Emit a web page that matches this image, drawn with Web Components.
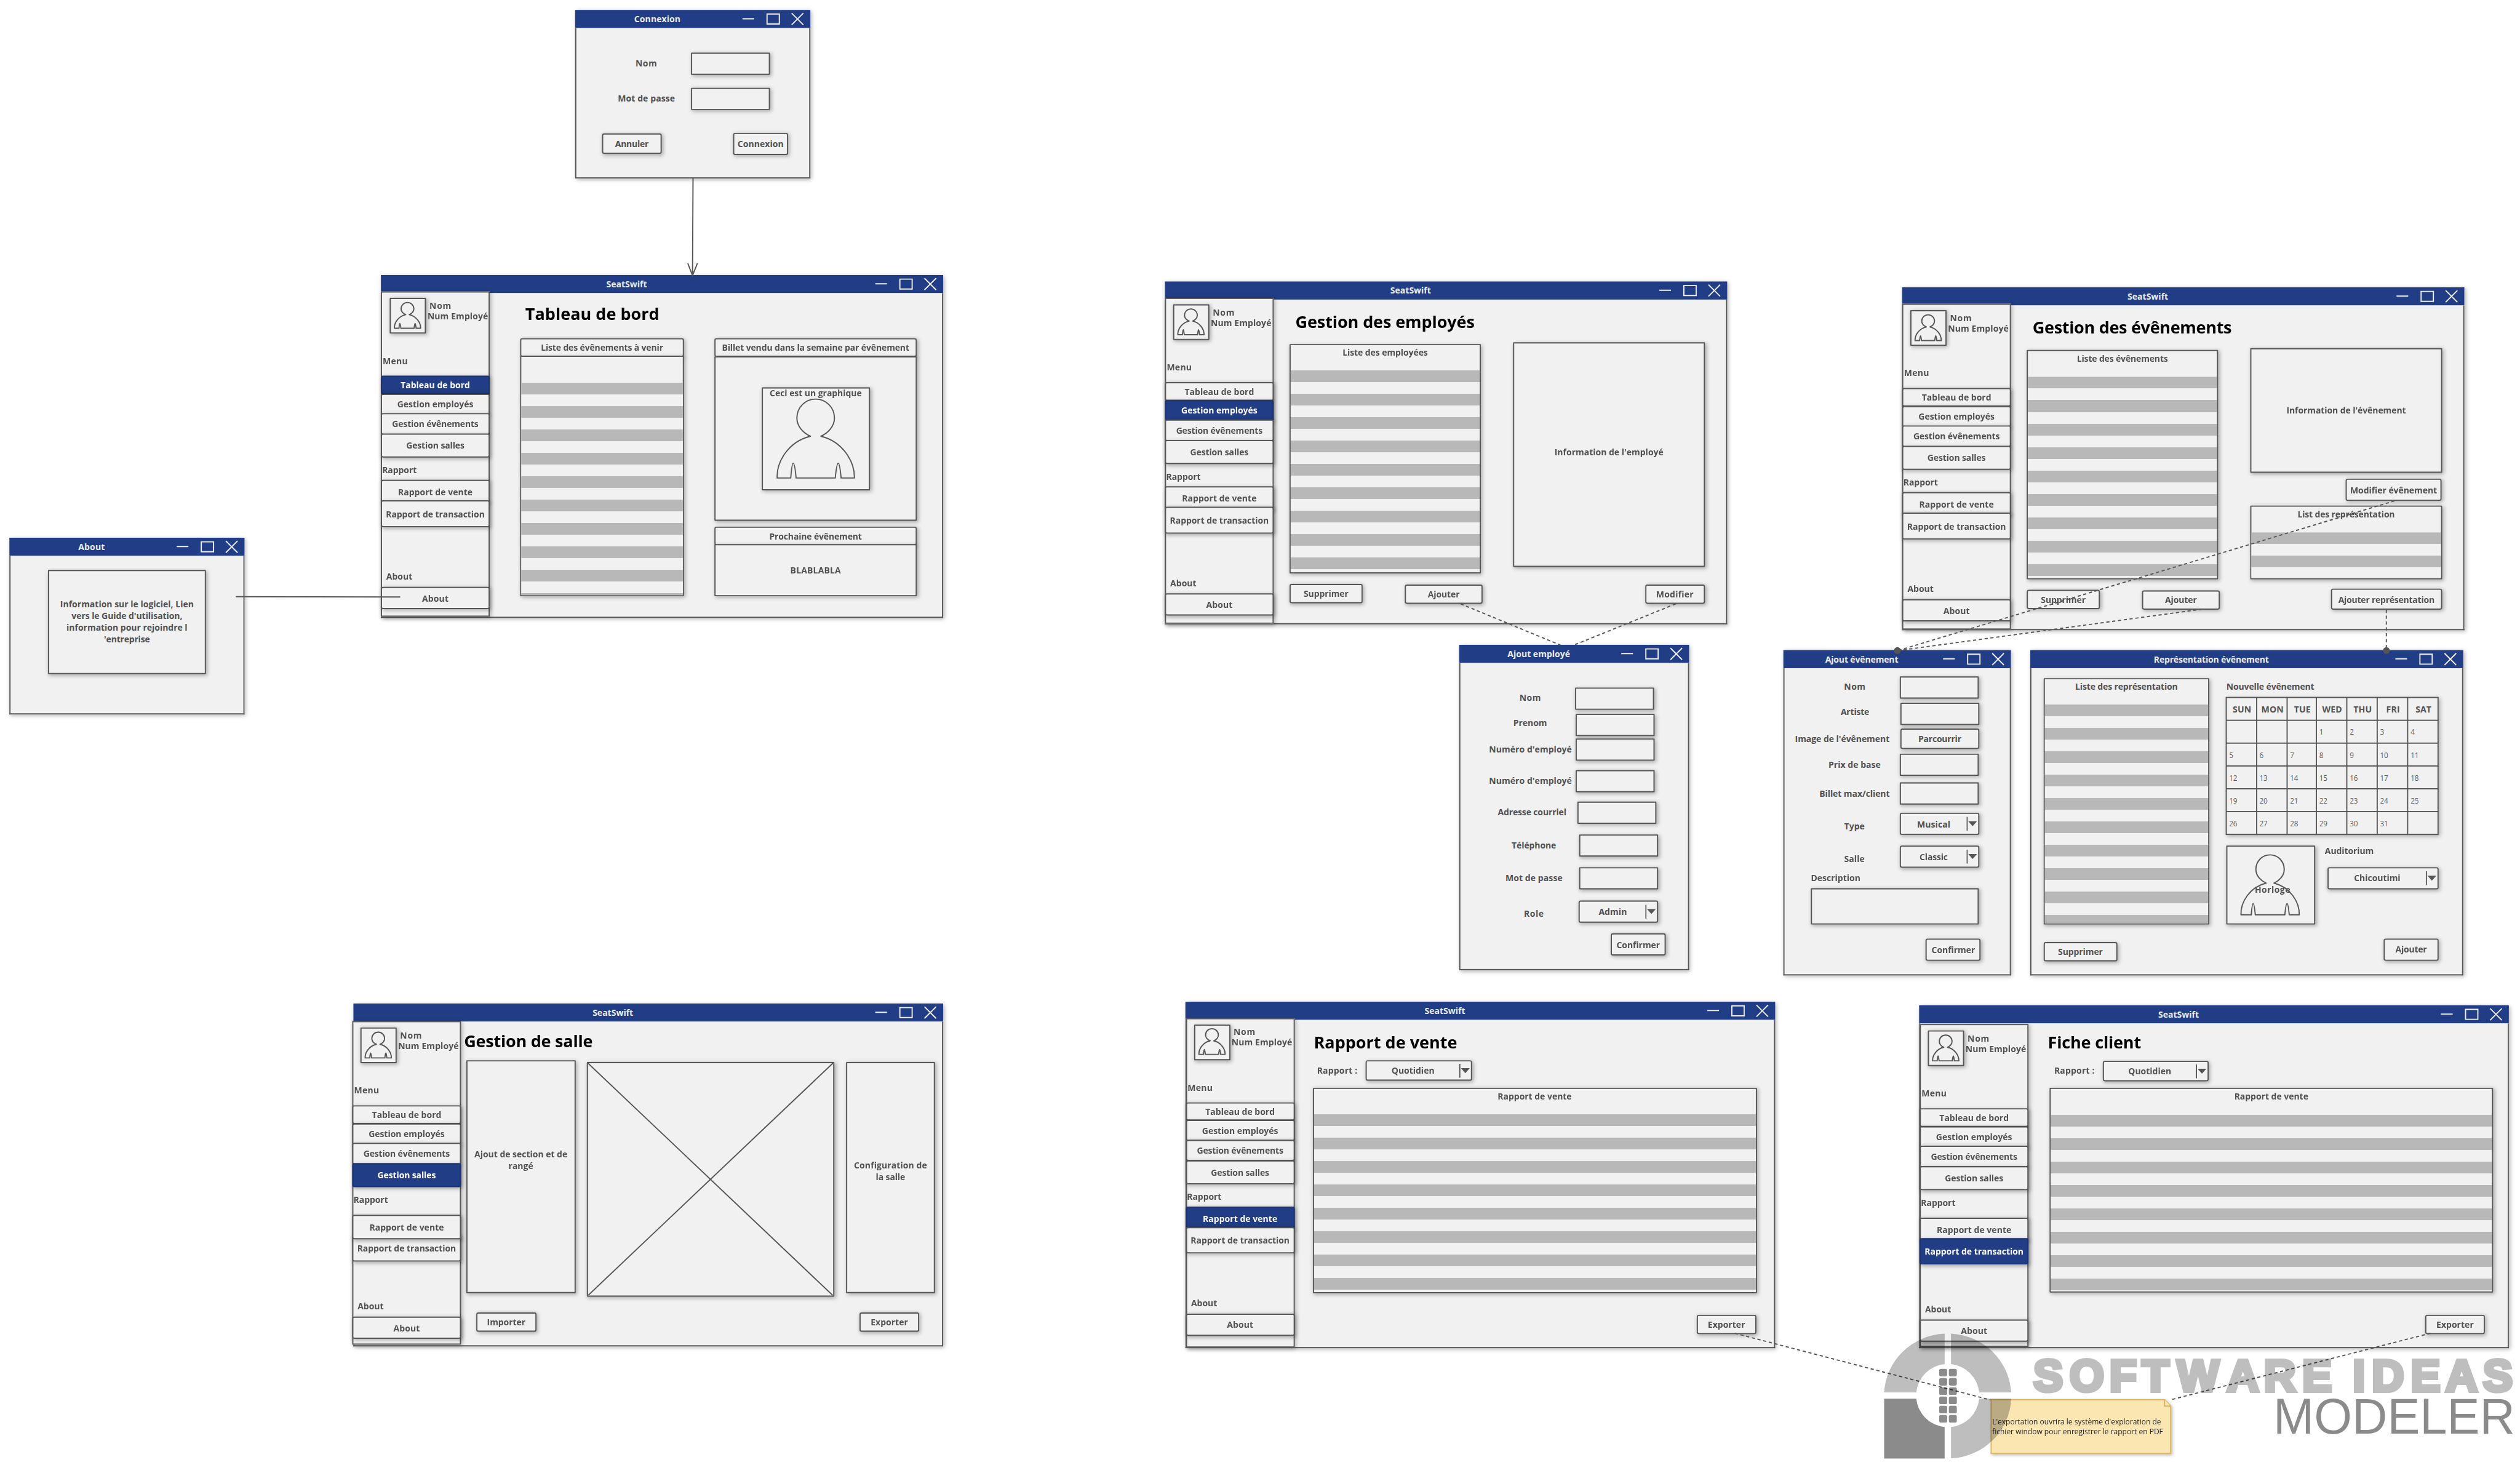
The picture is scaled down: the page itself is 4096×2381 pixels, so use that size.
<!DOCTYPE html>
<html lang="fr">
<head>
<meta charset="utf-8">
<title>SeatSwift – maquettes</title>
<style>
html,body{margin:0;padding:0;background:#fff;overflow:hidden;width:4096px;height:2381px}
</style>
</head>
<body>
<wf-board></wf-board>
<script>
const INK='#505050', LINE='#555555', FILL='#f1f1f1', BLUE='#213d85';
const SHADOW='2px 2px 7px rgba(0,0,0,.3)';
const FONT='"Open Sans","Noto Sans",sans-serif';

/* ---------- flow helpers: nested flex rows and columns with margins ---------- */
const node=(tag,attrs,x,y,w,h,body='')=>({x,y,w,h,html:m=>`<${tag} ${attrs} style="flex:none;margin:${m};width:${w}px;height:${h}px">${body}</${tag}>`});
const f=n=>+n.toFixed(2);
function pack(kind,kids){
  const x=kind==='row'?kids[0].x:Math.min(...kids.map(k=>k.x));
  const y=kind==='row'?Math.min(...kids.map(k=>k.y)):kids[0].y;
  const w=Math.max(...kids.map(k=>k.x+k.w))-x, h=Math.max(...kids.map(k=>k.y+k.h))-y;
  return {x,y,w,h,html:m=>{
    let cur=kind==='row'?x:y, out='';
    for(const k of kids){
      if(kind==='row'){out+=k.html(`${f(k.y-y)}px 0 0 ${f(k.x-cur)}px`);cur=k.x+k.w;}
      else{out+=k.html(`${f(k.y-cur)}px 0 0 ${f(k.x-x)}px`);cur=k.y+k.h;}
    }
    return `<div class="${kind}" style="margin:${m}">${out}</div>`;}};
}
const row=(...k)=>pack('row',k), col=(...k)=>pack('col',k);
const place=(n,ox,oy)=>n.html(`${f(n.y-oy)}px 0 0 ${f(n.x-ox)}px`);
const FLOW='.row,.col{display:flex;flex:none;align-items:flex-start}.col{flex-direction:column}';

/* text whose centre line is yc, starting at x */
const text=(t,x,yc,w,extra='')=>node('wf-label',`ink="${w}" ${extra}`,x,yc-10.5,w,20,t);
const textC=(t,cx,yc,w)=>text(t,cx-w/2,yc,w);
const title=(t,x,base,w)=>node('wf-label',`ink="${w}" kind="title"`,x,base-31,w,40,t);
const box=(kind,x,y,w,h,label='',tw='',lift=0)=>node('wf-box',`kind="${kind}" label="${label}" ink="${tw}" lift="${lift}"`,x,y,w,h);
const button=(...a)=>box('button',...a);
const panel=(...a)=>box('panel',...a);
const field=(x,y,w=135,h=38)=>box('field',x,y,w,h);
const select=(x,y,w,h,label,tw)=>node('wf-select',`label="${label}" ink="${tw}"`,x,y,w,h);
const list=(x,y,w,h,label,tw,start=45)=>node('wf-list',`label="${label}" ink="${tw}" start="${start}"`,x,y,w,h);
const side=(x,y,h,active,shift=0)=>node('wf-sidebar',`active="${active}" shift="${shift}"`,x,y,186,h);

class Base extends HTMLElement{
  constructor(){super();this.attachShadow({mode:'open'});}
  a(n,d=''){return this.getAttribute(n)??d;}
  connectedCallback(){this.shadowRoot.innerHTML=this.view();}
}
const ctx=document.createElement('canvas').getContext('2d');

customElements.define('wf-label',class extends Base{
  view(){
    const k=this.a('kind');
    const [size,weight,lh,color]=k==='title'?[28.4,700,40,'#000']:k==='note'?[12.6,400,17,'#262626']:[14.7,700,20,'inherit'];
    const t=this.textContent, w=+this.a('ink',0);
    let ls=0;
    if(w){ctx.font=`${weight} ${size*10}px ${FONT}`;const m=ctx.measureText(t);ls=(w-(m.actualBoundingBoxRight+m.actualBoundingBoxLeft)/10)/Math.max(1,t.length-1);}
    return `<style>:host{display:flex;justify-content:center;white-space:nowrap;color:${color};font:${weight} ${size}px/${lh}px ${FONT};letter-spacing:${ls.toFixed(3)}px}
    span{flex:none;margin-right:${(-ls).toFixed(3)}px}</style><span><slot></slot></span>`;
  }
});

const labels=(l,w)=>{const ws=w.split('|');return l?l.split('|').map((t,i)=>`<wf-label ink="${ws[i]}">${t}</wf-label>`).join(''):'';};

customElements.define('wf-box',class extends Base{
  view(){
    const k=this.a('kind'), lift=+this.a('lift',0), act=k==='active';
    return `<style>:host{display:flex;flex-direction:column;align-items:center;justify-content:center;box-sizing:border-box;
      background:${act?BLUE:FILL};border:2px solid ${act?'#1a3274':LINE};color:${act?'#fff':INK};
      border-radius:${k==='button'||act?3.5:1}px;box-shadow:${SHADOW};padding-bottom:${1+lift*2}px}
      ${k==='cross'?':host{padding:0}svg{width:100%;height:100%;display:block}':''}</style>
      ${k==='cross'?`<svg viewBox="0 0 100 100" preserveAspectRatio="none"><path d="M0 0L100 100M100 0L0 100" stroke="${LINE}" stroke-width="2" vector-effect="non-scaling-stroke" fill="none"/></svg>`:labels(this.a('label'),this.a('ink'))}`;
  }
});

customElements.define('wf-select',class extends Base{
  view(){return `<style>:host{display:flex;align-items:center;box-sizing:border-box;background:${FILL};border:2px solid ${LINE};border-radius:3.5px;box-shadow:${SHADOW};color:${INK}}
    .t{flex:1;display:flex;justify-content:center;padding-bottom:1px}svg{flex:none;display:block}</style>
    <div class="t">${labels(this.a('label'),this.a('ink'))}</div>
    <svg width="20" height="24" viewBox="0 0 20 24"><path d="M1 0V24" stroke="${LINE}" stroke-width="2"/><path d="M3 7.5H18L10.5 16Z" fill="${LINE}"/></svg>`;}
});

customElements.define('wf-list',class extends Base{
  view(){const s=+this.a('start',45)-2;return `<style>:host{display:flex;flex-direction:column;box-sizing:border-box;background:${FILL};border:2px solid ${LINE};border-radius:1px;box-shadow:${SHADOW};color:${INK}}
    header{flex:none;box-sizing:border-box;height:${s}px;padding-top:2px;display:flex;justify-content:center}
    main{flex:1;background:repeating-linear-gradient(#b8b8b8 0 20px,${FILL} 20px 40px)}</style>
    <header>${labels(this.a('label'),this.a('ink'))}</header><main></main>`;}
});

customElements.define('wf-person',class extends Base{
  view(){return `<style>:host{display:block}svg{display:block;width:100%;height:100%;overflow:visible}</style>
  <svg viewBox="26 19.5 132.6 135" preserveAspectRatio="none"><path d="M83.3 83C46 92 25 126 26.300 154.400H49.500C50.500 142 51.800 129 53.700 129C55.600 129 57.500 142 58.700 154.400H125.600C126.800 142 128.600 129 130.700 129C132.500 129 134.400 142 135.600 154.400H158.300C159 126 138 92 101 83C112 78 124.200 67 124.200 52C124.200 34 110 19.500 92 19.500C74 19.500 60 34 60 52C60 67 72 78 83.300 83Z" fill="none" stroke="${LINE}" stroke-width="2" stroke-linejoin="round" vector-effect="non-scaling-stroke"/></svg>`;}
});

/* framed picture placeholder with the person glyph and an optional caption over it */
customElements.define('wf-image',class extends Base{
  view(){const p=this.a('pad').split(' ').map(Number), cap=this.a('label');
    return `<style>:host{display:grid;box-sizing:border-box;background:${FILL};border:2px solid ${LINE};border-radius:1px;box-shadow:${SHADOW};color:${INK}}
    wf-person,.cap{grid-area:1/1}
    wf-person{width:${p[2]}px;height:${p[3]}px;margin:${p[1]-2}px 0 0 ${p[0]-2}px}
    .cap{display:flex;justify-content:center;margin:${+this.a('cy',0)-12.5}px ${-(+this.a('cx',0))}px 0 ${+this.a('cx',0)}px}</style>
    <wf-person></wf-person>${cap?`<div class="cap">${labels(cap,this.a('ink'))}</div>`:''}`;}
});
const image=(x,y,w,h,pad,label='',tw='',cy=0,cx=0)=>node('wf-image',`pad="${pad}" label="${label}" ink="${tw}" cy="${cy}" cx="${cx}"`,x,y,w,h);

customElements.define('wf-calendar',class extends Base{
  view(){
    const heads=['SUN','MON','TUE','WED','THU','FRI','SAT'];
    let c=heads.map(h=>`<b>${h}</b>`).join('');
    for(let i=0;i<35;i++){const d=i-2;c+=`<i>${d>0&&d<32?d:''}</i>`;}
    return `<style>:host{display:grid;box-sizing:border-box;padding:2px;gap:2px;background:${LINE};box-shadow:${SHADOW};
      grid-template-columns:49.8fr 50.2fr 47.8fr 50.2fr 49.7fr 50.3fr 49.7fr;grid-template-rows:repeat(6,1fr);color:${INK};font-family:${FONT}}
      b,i{background:${FILL};display:flex;align-items:center;font-style:normal;min-width:0;min-height:0}
      b{justify-content:center;font-size:14.800px;padding:2px 0 0 2px;letter-spacing:.15px}
      i{font-size:12.3px;padding:3px 0 0 4px;color:#5c5c5c;letter-spacing:-.2px}</style>${c}`;
  }
});

customElements.define('wf-sidebar',class extends Base{
  view(){
    const act=this.a('active'), s=+this.a('shift',0), dx=act==='Tableau de bord'?1.2:0;
    const item=(t,y,b,w)=>box(t===act?'active':'button',0,y,186,b-y,t,w);
    const vb=s===2?373:363+(s?9:0), vy=322.5+(s?8.7:0);
    const vente=item('Rapport de vente',vy,vb,125.6), trans=item('Rapport de transaction',357.5+(s?8.3:0),403+(s?8.3:0),166.7);
    if(s===2){const v=vente.html;vente.html=m=>v(m+';z-index:1');}
    const tree=col(
      row(image(14+dx/2,11,62,61,'8 7.5 45 44'),col(text('Nom',83+dx,24,34.7),text('Num Employé',79.4+dx,42.2,101.6))),
      text('Menu',4.3,118.7,40.4),
      item('Tableau de bord',144.2,176,117.4),
      item('Gestion employés',174.7,211,128.8),
      item('Gestion évênements',208.5,245,146.5),
      item('Gestion salles',243.5,284.2,98.5),
      text('Rapport',3,305.4,57.4),
      vente,trans,
      text('About',9.3,487.5,44.3),
      item('About',505.4,543.2,44.8));
    return `<style>:host{display:flex;align-items:flex-start;box-sizing:border-box;background:${FILL};border:2px solid ${LINE};box-shadow:${SHADOW};color:${INK}}${FLOW}</style>${place(tree,2,2)}`;
  }
});

customElements.define('wf-window',class extends Base{
  view(){return `<style>:host{display:flex;flex-direction:column;box-shadow:${SHADOW};color:${INK}}
    header{flex:none;height:31px;background:${BLUE};color:#ececec;display:flex;align-items:flex-start}
    .t{flex:1;display:flex;justify-content:center;padding-top:4.500px}svg{flex:none;display:block}
    main{flex:1;box-sizing:border-box;min-height:0;background:${FILL};border:2px solid ${LINE};border-top:0;display:flex;align-items:flex-start}</style>
    <header><div class="t">${labels(this.a('label'),this.a('ink'))}</div>
    <svg width="121" height="31" viewBox="0 0 121 31" fill="none" stroke="#f0f0f0" stroke-width="2"><path d="M5 15H25M47 7H68V24H47ZM89 5.500L109 25.500M109 5.500L89 25.500"/></svg></header>
    <main><slot></slot></main>`;}
});

/* connectors between windows */
customElements.define('wf-links',class extends Base{
  view(){return `<style>:host{display:block}svg{display:block}</style><svg width="4306" height="2503" fill="none" stroke="${LINE}" stroke-width="2">
    <path d="M1184.500 305L1183.600 470M1175.500 450L1183.600 471L1192 450"/>
    <path d="M403 1019.700L684 1020.200"/>
    <g stroke-dasharray="5.5 4.500"><path d="M2496.500 1032L2667 1102.500"/><path d="M2864 1032L2690 1102.500"/>
    <path d="M4092.400 856L3243 1112"/><path d="M3764 1041L3243 1112"/><path d="M4078.600 1042V1112"/>
    <path d="M2965 2278.500L3402 2392.500"/><path d="M4154 2278.500L3711 2392"/></g>
    <g fill="${LINE}" stroke="none"><circle cx="3243" cy="1111.800" r="5.800"/><circle cx="4078.700" cy="1111.800" r="5.800"/></g></svg>`;}
});

customElements.define('wf-note',class extends Base{
  view(){return `<style>:host{display:grid;filter:drop-shadow(2px 2px 3px rgba(0,0,0,.28))}
    svg,.t{grid-area:1/1}svg{display:block}.t{display:flex;flex-direction:column;align-items:flex-start;padding:29.500px 0 0 3px}</style>
    <svg width="309" height="94" viewBox="0 0 309 94"><path d="M1 1H297.500L308 12V93H1Z" fill="#fbe6b1" stroke="#d9b560" stroke-width="2"/><path d="M297.500 1V12H308" fill="#fbe6b1" stroke="#d9b560" stroke-width="2"/></svg>
    <div class="t"><wf-label kind="note" ink="286.800">L'exportation ouvrira le système d'exploration de</wf-label><wf-label kind="note" ink="291.800">fichier window pour enregistrer le rapport en PDF</wf-label></div>`;}
});

customElements.define('wf-logo',class extends Base{
  view(){
    let sq='';for(let r=0;r<6;r++)for(const x of [134.4,150.9])sq+=`<rect x="${x}" y="${(89.3+r*15.8).toFixed(1)}" width="13.600" height="12.900" rx="3"/>`;
    return `<style>:host{display:block}svg{display:block}</style><svg width="1126" height="253" viewBox="0 0 1126 253">
    <g fill="#000" opacity=".255">
      <path d="M143.700 29.200A108.500 106 0 0 0 40.300 129.700H95.200A54 54 0 0 1 143.700 81.300Z"/>
      <path d="M154.500 29.200A108.500 106 0 0 1 257.300 129.700H202.700A54 54 0 0 0 154.500 81.300Z"/>
      <path d="M154.500 242.500A108.500 106 0 0 0 257.300 140.300H202.700A54 54 0 0 1 154.500 188.800Z"/>
      <text x="295.300 357.200 425.500 481 540.700 625.900 689.200 754.700 800 841.200 874 940.100 999.700 1063.700" y="127.200" font-family="Liberation Sans" font-weight="700" font-size="76" stroke="#000" stroke-width="6.500" stroke-linejoin="miter">SOFTWARE IDEAS</text>
    </g>
    <g fill="#000" opacity=".455">
      <path d="M40.300 140.300H95.200A54 54 0 0 0 143.700 188.800V242.700H40.300Z"/>${sq}
      <text x="705.500" y="199.800" font-family="Liberation Sans" font-size="85" textLength="413" lengthAdjust="spacingAndGlyphs">MODELER</text>
    </g></svg>`;
  }
});

const rowOf=(label,cx,yc,w,control)=>row(textC(label,cx,yc,w),control);

const windows=[
 ['Connexion',77.3,983,17,402,288,col(
   rowOf('Nom',121.5,91,34.3,field(198,73)),
   rowOf('Mot de passe',121.8,151.7,95.7,field(198,133)),
   row(button(46,211,102,35,'Annuler',57.3),button(270,209.7,94,38,'Connexion',77)))],
 ['SeatSwift',68.5,651,470,961,586,row(side(0,28,556,'Tableau de bord'),col(
   title('Tableau de bord',248,77,226.7),
   row(col(box('button',238,107.5,280,32,'Liste des évênements à venir',207.7),list(238,138.2,280,410.4,'','',46)),
     col(button(570,107.5,346,32.3,'Billet vendu dans la semaine par évênement',318.9),
       node('wf-frame','',570,139.4,346,281,image(650.7,192,185,175.5,'26 19.5 132.6 135','Ceci est un graphique',156,9).html('50.600px 0 0 78.700px')),
       button(570,430.4,346,31.5,'Prochaine évênement',156.6),
       panel(570,460,346,88.6,'BLABLABLA',85.2)))))],
 ['About',45,16,919,402,302,panel(66,55,270,178,"Information sur le logiciel, Lien|vers le Guide d'utilisation,|information pour rejoindre l|'entreprise",'226|188.7|204.7|77',0.3)],
 ['SeatSwift',68.5,1991,481,961,586,row(side(0,28,557,'Gestion employés'),col(
   title('Gestion des employés',224,78.5,304.3),
   row(list(213,107,327,392,'Liste des employées',144),panel(595,104,328,384,"Information de l'employé",184.4,4.5)),
   row(button(213,517,125,33,'Supprimer',75.8),button(410,518,133,33,'Ajouter',54.3),button(820.5,518,102,33,'Modifier',62.5))))],
 ['SeatSwift',68.5,3251,491,961,586,row(side(0,28,557,''),col(
   title('Gestion des évênements',224,78.5,338.4),
   row(col(list(213,107,327,392,'Liste des évênements',154,46),row(button(213,517,125,33,'Supprimer',75.8),button(410,518,133,33,'Ajouter',54.3))),
     col(panel(595,104,328,213,"Information de l'évênement",202.7),
       button(758,327,164,38,'Modifier évênement',147),
       list(595,373,328,126,'List des représentation',164,46),
       button(733,515,189.5,36,'Ajouter représentation',163.5)))))],
 ['Ajout employé',106.3,2494,1102,393,556,col(
   rowOf('Nom',121.3,90.5,34.3,field(198,73)),
   rowOf('Prenom',121.3,133.7,55.3,field(199,118)),
   rowOf("Numéro d'employé",121.8,178,139.7,field(199,160)),
   rowOf("Numéro d'employé",121.8,232,139.7,field(199,214)),
   rowOf('Adresse courriel',124.5,285.8,116.3,field(202,268)),
   rowOf('Téléphone',127.7,342,75.3,field(205,324)),
   rowOf('Mot de passe',127.8,398,95.7,field(205,380)),
   rowOf('Role',127.5,459.6,31.7,select(204.5,437,136,38,'Admin',47.3)),
   button(259,493,94,38,'Confirmer',73.3))],
 ['Ajout évênement',124.7,3048,1111,389,556,col(
   rowOf('Nom',122,62.5,34.3,field(199,45)),
   rowOf('Artiste',122.5,105.8,48.3,field(200,90)),
   rowOf("Image de l'évênement",100.7,151,160,button(200,134,135,35,'Parcourrir',72)),
   rowOf('Prix de base',121.7,195.4,87.3,field(199,177)),
   rowOf('Billet max/client',121.7,245,118.7,field(199,226)),
   rowOf('Type',121.5,300.3,34.3,select(199,278,136,38,'Musical',54.3)),
   rowOf('Salle',121.5,356.4,33.7,select(199,334,136,38,'Classic',47)),
   text('Description',48.3,389.5,82.3),
   field(47,407,287,62),
   button(243.5,493,94,38,'Confirmer',73.3))],
 ['Représentation évênement',195,3470,1111,740,556,row(
   col(list(23,47.5,283,421.5,'Liste des représentation',173,45.5),button(23,499,125.5,33,'Supprimer',75.8)),
   col(text('Nouvelle évênement',336,62.3,148.7),node('wf-calendar','',334,80,364,236),
     row(image(335,334,152,135,'25 16 100 102.5','Horloge',58.7,76,3),
       col(text('Auditorium',504,342.5,82.6),select(508,371,190,38,'Chicoutimi',77.6))),
     button(604,493,94,38,'Ajouter',53.7)))],
 ['SeatSwift',68.5,604,1715,1008,586,row(side(-2,30,552.5,'Gestion salles',2),col(
   title('Gestion de salle',190,74.8,218),
   row(panel(193,97,186.5,398,'Ajout de section et de|rangé','158.5|40.5',28.3),box('cross',399,100,422.5,401),panel(842,100,152,395,'Configuration de|la salle','123.4|48.4',10.5)),
   row(button(210,528,102.5,33,'Importer',64.3),button(865,528,102,33,'Exporter',62.3))))],
 ['SeatSwift',68.5,2026,1712,1008,592,row(side(0.5,27.5,563,'Rapport de vente'),col(
   title('Rapport de vente',221,80,242),
   row(text('Rapport :',226,117.8,67),select(308,100,182,35,'Quotidien',71.6)),
   list(217.5,147,759,351,'Rapport de vente',124.7),
   button(873.5,535,102.5,32.5,'Exporter',62.3)))],
 ['SeatSwift',68.5,3280,1718,1008,585.5,row(side(1,32,552,'Rapport de transaction',1),col(
   title('Fiche client',221.5,74,156.5),
   row(text('Rapport :',232,111.8,67),select(314,95,180.5,35,'Quotidien',71.6)),
   list(223,141,758,350,'Rapport de vente',124.7,46),
   button(865,528.5,102,33,'Exporter',62.3)))]
];

customElements.define('wf-frame',class extends Base{
  view(){return `<style>:host{display:flex;align-items:flex-start;box-sizing:border-box;background:${FILL};border:2px solid ${LINE};border-radius:1px;box-shadow:${SHADOW}}</style><slot></slot>`;}
});

/* free canvas holding the windows, the connectors, the note and the watermark */
customElements.define('wf-board',class extends Base{
  view(){
    return `<style>:host{display:block;width:4096px;height:2381px;overflow:hidden;background:#fff;contain:paint}
      .canvas{position:relative;width:4306px;height:2503px;transform:scale(.951);transform-origin:0 0}
      wf-window,wf-links,wf-note,wf-logo{position:absolute}${FLOW}</style><div class="canvas">`+
      windows.map(([t,tw,x,y,w,h,tree])=>`<wf-window label="${t}" ink="${tw}" style="left:${x}px;top:${y}px;width:${w}px;height:${h}px">${place(tree,2,31)}</wf-window>`).join('')+
      `<wf-note style="left:3402px;top:2391px"></wf-note><wf-links style="left:0;top:0"></wf-links><wf-logo style="left:3179.500px;top:2250px"></wf-logo></div>`;
  }
});
</script>
</body>
</html>
